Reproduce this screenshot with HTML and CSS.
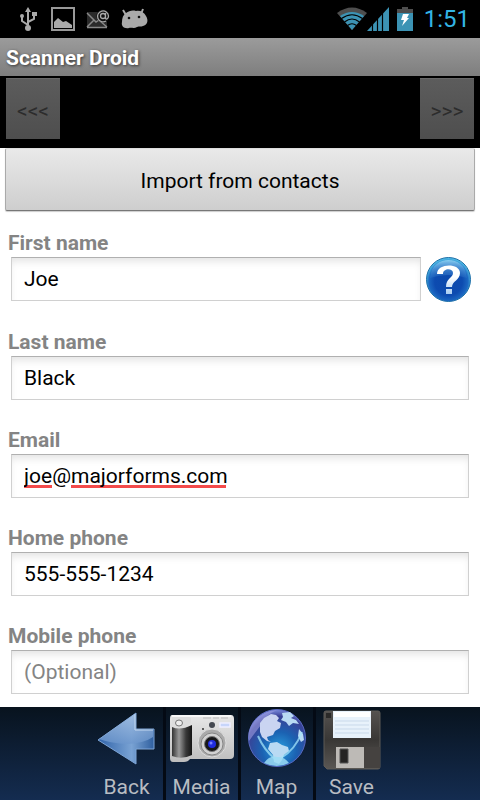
FILE: index.html
```html
<!DOCTYPE html>
<html lang="en">
<head>
    <meta charset="UTF-8">
    <meta name="viewport" content="width=device-width, initial-scale=1.0">
    <title>Scanner Droid</title>
    <link rel="stylesheet" href="styles.css">
</head>
<body>
    <div class="status-bar">
        <div class="notifications">
            <svg width="18" height="24" viewBox="0 0 18 24" fill="none" stroke="#aaa" stroke-width="2">
                <path d="M9 20V4M9 18L3 14V9M9 15L15 12V8"/>
                <path d="M6 5L9 0l3 5z" fill="#aaa" stroke="none"/>
                <circle cx="9" cy="21" r="3" fill="#aaa" stroke="none"/>
                <circle cx="3" cy="9" r="2" fill="#aaa" stroke="none"/>
                <path d="M13 5h5v4h-5z" fill="#aaa" stroke="none"/>
            </svg>
            <svg width="24" height="24" viewBox="0 0 24 24">
                <path d="M1 1h22v22H1z" fill="none" stroke="#999" stroke-width="2"/>
                <path d="M3 21v-6l4-4 5 4 3-1 6 4v3z" fill="#aaa"/>
            </svg>
            <svg width="24" height="20" viewBox="0 0 24 20" fill="none">
                <path d="M1 3h20v16H1z" fill="#2b2b2b"/>
                <path d="M1 4l9 9 3-2M1 18l7-7M21 18l-7-6M1 18.500h20" stroke="#888" stroke-width="1.500"/>
                <circle cx="17" cy="7" r="6.500" fill="#111"/>
                <path d="M19.500 4v5c0 2 3 1 3-2a5.500 5.500 0 1 0-2.500 5M19.500 7a2.500 2.500 0 1 1-5 0a2.500 2.500 0 1 1 5 0" stroke="#aaa" stroke-width="1.300"/>
            </svg>
            <svg width="28" height="22" viewBox="0 0 28 22">
                <path d="M5 7L2 2M20 6l2-5" stroke="#aaa" stroke-width="2"/>
                <path d="M5 5C8 3 11 2 15 3c4-1 8 1 10 5 3 5 1 9-3 10-2 1-4 0-6 1-3 2-6 0-8 1-5 1-8-2-7-6 0-4 1-7 4-9z" fill="#aaa"/>
                <circle cx="8" cy="10" r="1.300" fill="#111"/>
                <circle cx="18" cy="9" r="1.300" fill="#111"/>
            </svg>
        </div>
        <div class="system">
            <svg width="30" height="24" viewBox="0 0 30 24" fill="none">
                <path d="M0 6Q15-5 30 6L15 23z" fill="#4e4e4e"/>
                <path d="M3 9Q15 1 27 9L15 23z" fill="#3c93b4"/>
                <path d="M4.500 11.500Q15 4 25.500 11.500M7.500 15Q15 9 22.500 15M10.500 18.500Q15 15 19.500 18.500" stroke="#000" stroke-width="1.200"/>
            </svg>
            <svg width="22" height="24" viewBox="0 0 22 24">
                <path d="M0 24L22 0v24z" fill="#3c93b4"/>
                <path d="M5.500 24V17M10.500 24V12M15.500 24V6" stroke="#000" stroke-width="1.200"/>
            </svg>
            <svg class="battery" width="16" height="24" viewBox="0 0 16 24">
                <path d="M5 0h6v2h5v4H0V2h5z" fill="#4e4e4e"/>
                <path d="M0 6h16v18H0z" fill="#3c93b4"/>
                <path d="M6 7h6l-2 4h2l-7 8 2-6H4z" fill="#fff"/>
            </svg>
            <span class="clock">1:51</span>
        </div>
    </div>

    <h1>Scanner Droid</h1>

    <nav class="pager">
        <button class="page-btn" type="button" disabled>&lt;&lt;&lt;</button>
        <button class="page-btn" type="button" disabled>&gt;&gt;&gt;</button>
    </nav>

    <main>
        <form id="contact-form">
            <button class="import-btn" type="button">Import from contacts</button>

            <div class="field">
                <label for="first-name">First name</label>
                <div class="field-row">
                    <input type="text" id="first-name" value="Joe">
                    <button class="help-btn" type="button" aria-label="Help">
                        <svg width="45" height="45" viewBox="0 0 45 45">
                            <defs>
                                <radialGradient id="help-fill" cx="50%" cy="55%" r="52%">
                                    <stop offset="0" stop-color="#0b49ac"/>
                                    <stop offset=".6" stop-color="#0d4bb0"/>
                                    <stop offset=".85" stop-color="#1c68c2"/>
                                    <stop offset="1" stop-color="#4cb8e4"/>
                                </radialGradient>
                                <linearGradient id="help-shine" x1="0" y1="0" x2="0" y2="1">
                                    <stop offset="0" stop-color="#9bdcf7" stop-opacity=".8"/>
                                    <stop offset="1" stop-color="#2e77cb" stop-opacity=".3"/>
                                </linearGradient>
                                <linearGradient id="help-mark" x1="0" y1="0" x2="0" y2="1">
                                    <stop offset=".4" stop-color="#fff"/>
                                    <stop offset="1" stop-color="#a9cdf2"/>
                                </linearGradient>
                            </defs>
                            <circle cx="22.500" cy="22.500" r="22" fill="url(#help-fill)" stroke="#1e6fa8"/>
                            <path d="M4 21C5 8 14 3 22.500 3S40 8 41 21Q22 15 4 21z" fill="url(#help-shine)"/>
                            <path d="M11 17C11 6 34 6 34 16c0 7-8 8-8 14h-6c0-9 7-9 7-14 0-5-10-5-10 1zM20 32h6v5h-6z" fill="url(#help-mark)"/>
                        </svg>
                    </button>
                </div>
            </div>

            <div class="field">
                <label for="last-name">Last name</label>
                <div class="field-row">
                    <input type="text" id="last-name" value="Black">
                </div>
            </div>

            <div class="field">
                <label for="email">Email</label>
                <div class="field-row">
                    <input class="misspelled" type="email" id="email" value="joe@majorforms.com">
                </div>
            </div>

            <div class="field">
                <label for="home-phone">Home phone</label>
                <div class="field-row">
                    <input type="tel" id="home-phone" value="555-555-1234">
                </div>
            </div>

            <div class="field">
                <label for="mobile-phone">Mobile phone</label>
                <div class="field-row">
                    <input type="tel" id="mobile-phone" placeholder="(Optional)">
                </div>
            </div>
        </form>
    </main>

    <footer class="toolbar">
        <button class="tool" type="button">
            <svg width="64" height="66" viewBox="0 0 64 66">
                <defs>
                    <linearGradient id="arrow-fill" x1="0" y1="0" x2="1" y2="0">
                        <stop offset="0" stop-color="#2f62a8"/>
                        <stop offset=".6" stop-color="#7aa3d4"/>
                        <stop offset="1" stop-color="#2f5f9f"/>
                    </linearGradient>
                    <linearGradient id="arrow-shine" x1="0" y1="0" x2="0" y2="1">
                        <stop offset="0" stop-color="#a9c4e5"/>
                        <stop offset="1" stop-color="#6c96cc"/>
                    </linearGradient>
                </defs>
                <path d="M3 33L41 6v16h18v20H41v15z" fill="url(#arrow-fill)" stroke="#7ea5d6" stroke-width="1" stroke-linejoin="round"/>
                <path d="M4 32L40 7v16h18v7Q48 37 30 37 15 36 4 32z" fill="url(#arrow-shine)" opacity=".75"/>
                <path d="M40 7v16h18" fill="none" stroke="#c4d8ef"/>
            </svg>
            <span>Back</span>
        </button>
        <button class="tool" type="button">
            <svg width="64" height="66" viewBox="0 0 64 66">
                <defs>
                    <linearGradient id="camera-body" x1="0" y1="0" x2="0" y2="1">
                        <stop offset="0" stop-color="#e8e8e8"/>
                        <stop offset="1" stop-color="#bdbdbd"/>
                    </linearGradient>
                    <linearGradient id="camera-grip" x1="0" y1="0" x2="1" y2="0">
                        <stop offset="0" stop-color="#333"/>
                        <stop offset=".35" stop-color="#999"/>
                        <stop offset=".7" stop-color="#383838"/>
                        <stop offset="1" stop-color="#151515"/>
                    </linearGradient>
                </defs>
                <path d="M2 8h59q3 0 3 4v36q0 4-4 4H20q-2 3-6 3H3q-3 0-3-4V12q0-4 2-4z" fill="url(#camera-body)"/>
                <path d="M2 9h59" stroke="#f8f8f8" stroke-width="2"/>
                <path d="M33 11h8M43 11h6M51 11h7" stroke="#bbb"/>
                <path d="M2 20q8 4 20-2v30q-10 5-20 1z" fill="url(#camera-grip)"/>
                <path d="M2 10h17q2 0 2 3v3q-9 6-19 2z" fill="#ddd"/>
                <ellipse cx="9" cy="16" rx="3.500" ry="3" fill="#eee" stroke="#777"/>
                <circle cx="42" cy="18" r="3" fill="#454951"/>
                <path d="M50 16h10v4H50z" fill="#c7d5fa" stroke="#eef" stroke-width="1.500"/>
                <circle cx="33" cy="22" r="1" fill="#333"/>
                <circle cx="42" cy="36" r="14" fill="#aaa" stroke="#ddd"/>
                <circle cx="42" cy="37" r="11" fill="#d2d2d2" stroke="#858585"/>
                <circle cx="42" cy="37" r="7.500" fill="#171719" stroke="#777"/>
                <circle cx="42" cy="37" r="4" fill="#202cdf"/>
                <circle cx="41" cy="36" r="1.500" fill="#7781ff"/>
            </svg>
            <span>Media</span>
        </button>
        <button class="tool" type="button">
            <svg width="64" height="66" viewBox="0 0 64 66">
                <defs>
                    <radialGradient id="globe-fill" cx="54%" cy="70%" r="68%">
                        <stop offset="0" stop-color="#2a9ede"/>
                        <stop offset=".45" stop-color="#1b62b2"/>
                        <stop offset=".85" stop-color="#3a4196"/>
                        <stop offset="1" stop-color="#7180d2"/>
                    </radialGradient>
                </defs>
                <circle cx="32" cy="31" r="28.500" fill="url(#globe-fill)" stroke="#5768c0"/>
                <path d="M8 16Q16 4 32 3 20 8 16 18 9 27 4 34 2 24 8 16z" fill="#9b9de0" opacity=".6"/>
                <path d="M15 16l4-5 7-4 5 1 3 3-2 3 4 2-1 5-5 3-2 4-6 2 1 3 3 2-4-1-5-4-2-5z" fill="#cad4f1"/>
                <path d="M37 6l8-1 4 4-3 2 5 2 3 4-6-1-4 3-3-4-5-2 2-3zM54 22l4 5 1 6-3 2-3-6zM25 36l7-1 5 3 6 2 1 4-5 4-2 5-3 4-5-2-1-7-5-6z" fill="#b9daf3"/>
                <path d="M13 29Q19 43 30 52M57 25Q50 43 36 51" fill="none" stroke="#a3e4fa" stroke-width="2" opacity=".75"/>
                <path d="M19 56q6-8 13-6 7-1 12 6-12 6-25 0z" fill="#9cdcf5" opacity=".85"/>
            </svg>
            <span>Map</span>
        </button>
        <button class="tool" type="button">
            <svg width="64" height="66" viewBox="0 0 64 66">
                <defs>
                    <linearGradient id="disk-fill" x1="0" y1="0" x2="0" y2="1">
                        <stop offset="0" stop-color="#555250"/>
                        <stop offset=".5" stop-color="#393735"/>
                        <stop offset="1" stop-color="#5a5754"/>
                    </linearGradient>
                </defs>
                <path d="M6 4h52q2 0 2 2v54q0 2-2 2H7l-3-3V6q0-2 2-2z" fill="url(#disk-fill)" stroke="#5d5a57"/>
                <path d="M6 6h5v5H6z" fill="#2a2928"/>
                <path d="M13 4h38v27H13z" fill="#e8f2fb"/>
                <path d="M14 5h36v5H14z" fill="#fff"/>
                <path d="M15 14h34M15 18h34M15 22h34M15 26h34" stroke="#c9d9ea"/>
                <path d="M16 40h28v21H16z" fill="#bdbab6"/>
                <path d="M44 40h16v21H44z" fill="#454240"/>
                <path d="M20 42h8v14h-8z" fill="#252423" stroke="#555"/>
            </svg>
            <span>Save</span>
        </button>
    </footer>
</body>
</html>
```
FILE: styles.css
```css
*{
    margin: 0;
    padding: 0;
    box-sizing: border-box;
    font-family: Roboto, "Noto Sans", sans-serif;
}
body{
    display: flex;
    flex-direction: column;
    height: 100vh;
    background-color: #fff;
    font-size: 21px;
}
svg{
    display: block;
    flex-shrink: 0;
}
button{
    border: none;
    font-size: 21px;
    cursor: pointer;
}

/* status bar */
.status-bar{
    display: flex;
    justify-content: space-between;
    align-items: center;
    height: 38px;
    flex-shrink: 0;
    padding: 0 10px 0 19px;
    background-color: #000;
}
.notifications{
    display: flex;
    align-items: center;
    gap: 11px;
}
.notifications svg:first-child{
    margin-right: 3px;
}
.system{
    display: flex;
    align-items: center;
}
.battery{
    margin: 0 11px 0 8px;
}
.clock{
    font-size: 24px;
    line-height: 38px;
    color: #33b5e5;
}

h1{
    flex-shrink: 0;
    padding-left: 6px;
    height: 38px;
    font-size: 21px;
    line-height: 40px;
    font-weight: bold;
    color: #fff;
    background: linear-gradient(#9b9b9b, #7e7e7e);
    text-shadow: 1px 1px 3px #333;
}

/* previous / next */
.pager{
    display: flex;
    justify-content: space-between;
    flex-shrink: 0;
    padding: 2px 6px 9px;
    background-color: #000;
}
.page-btn{
    width: 54px;
    height: 61px;
    padding-top: 3px;
    background: linear-gradient(#5c5c5c, #4e4e4e);
    border-top: 1px solid #696969;
    color: #2c2c2c;
    font-size: 21px;
    cursor: default;
}

/* form */
main{
    flex: 1;
    min-height: 0;
    overflow-y: auto;
    scrollbar-width: none;
}
.import-btn{
    display: block;
    width: calc(100% - 10px);
    height: 63px;
    margin: 0 5px 18px;
    padding-top: 3px;
    border: 1px solid #aaa;
    border-top-color: #ddd;
    border-bottom-color: #777;
    border-radius: 2px;
    background: linear-gradient(#e9e9e9, #cecece);
    box-shadow: 0 1px 1px #ccc;
    color: #000;
}
.field{
    margin-bottom: 26px;
}
.field:last-child{
    margin-bottom: 13px;
}
.field label{
    display: block;
    padding-left: 8px;
    line-height: 28px;
    font-weight: bold;
    color: #848484;
}
.field-row{
    display: flex;
    align-items: flex-start;
    gap: 5px;
    padding: 0 11px;
}
.field-row:has(.help-btn){
    padding-right: 9px;
}
.field input{
    flex: 1;
    min-width: 0;
    height: 44px;
    padding: 0 12px;
    border: 1px solid #d0d0d0;
    border-top-color: #b0b0b0;
    background-color: #fff;
    box-shadow: inset 0 6px 9px -3px #e2e2e2;
    font-size: 21px;
    color: #000;
    outline: none;
}
.field input::placeholder{
    color: #848484;
}
/* spelling marks under both parts of the address */
.field .misspelled{
    background-image: linear-gradient(#f44b4b, #f44b4b), linear-gradient(#f44b4b, #f44b4b);
    background-repeat: no-repeat;
    background-size: 28px 3px, 155px 3px;
    background-position: 12px 30px, 59px 30px;
}
.help-btn{
    background: none;
}

/* toolbar */
.toolbar{
    display: flex;
    justify-content: center;
    flex-shrink: 0;
    height: 93px;
    padding-right: 2px;
    background: linear-gradient(#08131e, #142c50);
}
.tool{
    display: flex;
    flex-direction: column;
    align-items: center;
    justify-content: flex-start;
    width: 75px;
    background: none;
    color: #b8bcc2;
    line-height: 28px;
    border-right: 3px solid #040a14;
}
.tool:last-child{
    width: 72px;
    border-right: none;
}
```
